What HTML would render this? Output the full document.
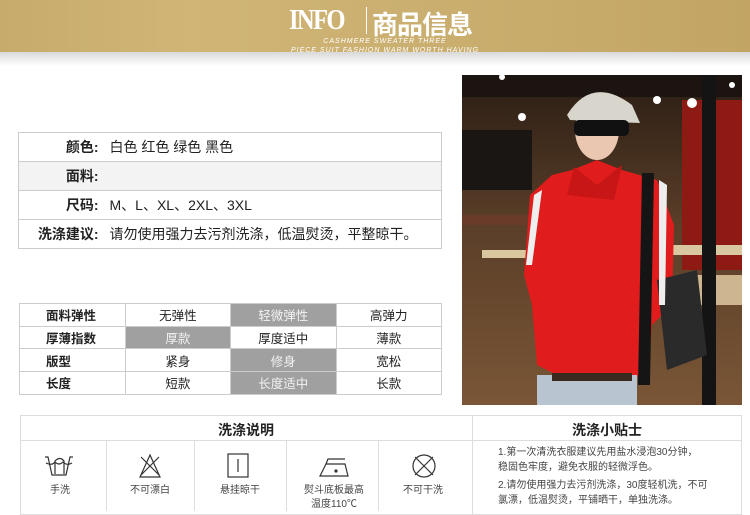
<!DOCTYPE html>
<html><head><meta charset="utf-8"><style>
*{margin:0;padding:0;box-sizing:border-box}
body{width:750px;height:510px;background:#fff;position:relative;overflow:hidden;font-family:"Liberation Sans","Noto Sans CJK SC",sans-serif;color:#222}
.hdr{position:absolute;left:0;top:0;width:750px;height:52px;background:linear-gradient(90deg,#c6ab6c 0%,#d0b577 25%,#cbb071 50%,#c7ab6b 75%,#c2a564 100%)}
.shadow{position:absolute;left:0;top:52px;width:750px;height:14px;background:linear-gradient(#d9d9d9,#fff)}
.abs{position:absolute}
table{border-collapse:collapse;position:absolute}
.t1{left:18px;top:132px;width:424px;font-size:14px}
.t1 td{border:1px solid #ccc;border-left:none;border-right:none;height:29px}
.t1{border:1px solid #ccc}
.t1 td.l{text-align:right;width:82px;padding-right:2px;font-weight:bold}
.t1 td.v{padding-left:9px}
.t2{left:19px;top:303px;width:423px;font-size:12.5px;border:1px solid #ccc}
.t2 td{border:1px solid #ccc;height:22.7px;text-align:center;width:106px}
.t2 td.k{text-align:left;padding-left:26px;font-weight:bold}
.t2 td.g{background:#a0a0a0;color:#f2f2f2}
.box{position:absolute;left:20px;top:415px;width:722px;height:100px;border:1px solid #ddd}
.vl{position:absolute;top:441px;width:1px;height:70px;background:#ddd}
.cap{position:absolute;font-size:10px;color:#444;text-align:center;width:90px;line-height:14px}
</style></head><body>
<div class="hdr"></div>
<div class="shadow"></div>
<div class="abs" style="left:289px;top:4px;color:#fff;font-family:'Liberation Serif',serif;font-size:29px;font-weight:bold;letter-spacing:-2px;transform:scaleX(.85);transform-origin:left">INFO</div>
<div class="abs" style="left:366px;top:7px;width:1px;height:27px;background:#fff"></div>
<div class="abs" style="left:372px;top:5px;color:#fff;font-size:26px;font-weight:bold;letter-spacing:-1px">商品信息</div>
<div class="abs" style="left:290px;top:37px;width:190px;text-align:center;color:#fff;font-size:7px;font-style:italic;letter-spacing:1px;line-height:9px">CASHMERE SWEATER THREE<br>PIECE SUIT FASHION WARM WORTH HAVING</div>

<table class="t1">
<tr><td class="l">颜色:</td><td class="v">白色 红色 绿色 黑色</td></tr>
<tr style="background:#f3f3f3"><td class="l">面料:</td><td class="v"></td></tr>
<tr><td class="l">尺码:</td><td class="v">M、L、XL、2XL、3XL</td></tr>
<tr><td class="l">洗涤建议:</td><td class="v">请勿使用强力去污剂洗涤，低温熨烫，平整晾干。</td></tr>
</table>

<table class="t2">
<tr><td class="k">面料弹性</td><td>无弹性</td><td class="g">轻微弹性</td><td>高弹力</td></tr>
<tr><td class="k">厚薄指数</td><td class="g">厚款</td><td>厚度适中</td><td>薄款</td></tr>
<tr><td class="k">版型</td><td>紧身</td><td class="g">修身</td><td>宽松</td></tr>
<tr><td class="k">长度</td><td>短款</td><td class="g">长度适中</td><td>长款</td></tr>
</table>

<svg class="abs" style="left:462px;top:75px" width="280" height="330" viewBox="0 0 280 330">
<defs><linearGradient id="bg" x1="0" y1="0" x2="0" y2="1"><stop offset="0" stop-color="#2a1d14"/><stop offset=".45" stop-color="#5a3e28"/><stop offset="1" stop-color="#7a5636"/></linearGradient></defs>
<rect width="280" height="330" fill="url(#bg)"/>
<rect x="0" y="0" width="280" height="22" fill="#1c1410"/>
<rect x="220" y="25" width="60" height="170" fill="#8e1a14"/>
<rect x="0" y="55" width="70" height="60" fill="#1a1614"/>
<rect x="0" y="140" width="80" height="10" fill="#6b3b2a"/>
<rect x="20" y="175" width="50" height="8" fill="#d9c7a0"/>
<rect x="200" y="170" width="80" height="10" fill="#d9c7a0"/>
<rect x="215" y="200" width="65" height="30" fill="#cdb68f"/>
<rect x="240" y="0" width="14" height="330" fill="#141414"/>
<circle cx="40" cy="2" r="3" fill="#fff"/><circle cx="195" cy="25" r="4" fill="#fff"/><circle cx="230" cy="28" r="5" fill="#fff"/><circle cx="60" cy="42" r="4" fill="#fff"/><circle cx="270" cy="10" r="3" fill="#fff"/>
<path d="M75 290 L70 230 L62 200 L68 120 L90 100 L110 95 L135 85 L160 95 L195 105 L212 150 L210 230 L190 250 L186 300 L150 305 L95 300 Z" fill="#e01c1c"/>
<path d="M105 120 L112 92 L135 110 L160 90 L152 125 Z" fill="#c81515"/>
<path d="M180 98 L192 98 L188 310 L176 310 Z" fill="#151515"/>
<path d="M195 205 L235 195 L245 280 L205 295 Z" fill="#2a2a2a"/>
<path d="M197 105 L205 110 L203 230 L197 230 Z" fill="#eee"/>
<path d="M72 120 L80 115 L70 190 L64 190 Z" fill="#eee"/>
<ellipse cx="135" cy="55" rx="22" ry="30" fill="#e9c7b1"/>
<path d="M105 40 Q130 0 170 30 L178 48 L108 45 Z" fill="#d8d6cc"/>
<rect x="112" y="45" width="55" height="16" rx="5" fill="#111"/>
<rect x="75" y="300" width="100" height="30" fill="#b8c4cf"/>
<rect x="90" y="298" width="80" height="8" fill="#3a2a1e"/>
</svg>

<div class="box"></div>
<div class="abs" style="left:20px;top:440px;width:722px;height:1px;background:#ddd"></div>
<div class="vl" style="left:472px;top:415px;height:100px"></div>
<div class="vl" style="left:106px"></div><div class="vl" style="left:194px"></div><div class="vl" style="left:286px"></div><div class="vl" style="left:378px"></div>
<div class="abs" style="left:20px;top:420px;width:452px;text-align:center;font-size:14px;font-weight:bold">洗涤说明</div>
<div class="abs" style="left:472px;top:420px;width:270px;text-align:center;font-size:14px;font-weight:bold">洗涤小贴士</div>

<svg class="abs" style="left:0;top:450px" width="472" height="40" fill="none" stroke="#333" stroke-width="1.2">
<path d="M45 7 L48 7 L52 25 L66 25 L70 7 L73 7"/><path d="M46 13 Q52 16 55 12 Q59 16 63 12 Q67 16 72 13"/><path d="M55 24 L55 11 Q60 6 64 11 L64 24"/>
<path d="M150 5 L140 27 L160 27 Z"/><path d="M141 7 L159 25 M159 7 L141 25"/>
<rect x="228" y="4" width="20" height="23"/><path d="M238 9 L238 22"/>
<path d="M320 26 L326 14 L345 14 L348 26 Z"/><path d="M326 14 L328 9 L345 9"/><circle cx="336" cy="21" r="1" fill="#333"/>
<circle cx="424" cy="16" r="11"/><path d="M415 7 L433 25 M433 7 L415 25"/>
</svg>
<div class="cap" style="left:15px;top:484px">手洗</div>
<div class="cap" style="left:105px;top:484px">不可漂白</div>
<div class="cap" style="left:195px;top:484px">悬挂晾干</div>
<div class="cap" style="left:289px;top:484px">熨斗底板最高<br>温度110℃</div>
<div class="cap" style="left:378px;top:484px">不可干洗</div>
<div class="abs" style="left:498px;top:446px;font-size:10px;color:#444;line-height:14.5px;width:240px">1.第一次清洗衣服建议先用盐水浸泡30分钟，<br>稳固色牢度，避免衣服的轻微浮色。<div style="height:4px"></div>2.请勿使用强力去污剂洗涤，30度轻机洗，不可<br>氯漂，低温熨烫，平铺晒干，单独洗涤。</div>
</body></html>
